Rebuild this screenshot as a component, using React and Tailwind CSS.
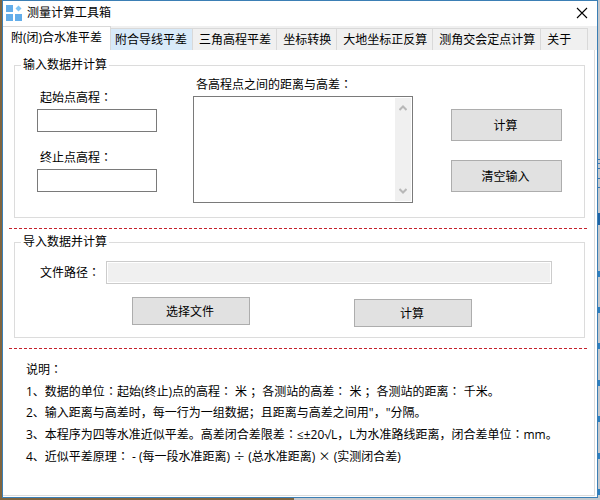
import clsx from "clsx";

const TABS = [
  { label: "附(闭)合水准平差", state: "active" },
  { label: "附合导线平差", state: "hover" },
  { label: "三角高程平差" },
  { label: "坐标转换" },
  { label: "大地坐标正反算" },
  { label: "测角交会定点计算" },
  { label: "关于", wide: true },
];

const NOTES = [
  "1、数据的单位：起始(终止)点的高程： 米 ；各测站的高差： 米 ；各测站的距离： 千米。",
  "2、输入距离与高差时，每一行为一组数据；且距离与高差之间用\"，\"分隔。",
  "3、本程序为四等水准近似平差。高差闭合差限差：≤±20√L，L为水准路线距离，闭合差单位：mm。",
  "4、近似平差原理： - (每一段水准距离) ÷ (总水准距离) × (实测闭合差)",
];

// y positions of the scroll ticks on the desktop strip
const TICKS = [274, 310, 346, 383, 419, 456, 492];

// colon and operators sit in the middle of a full-width cell
function Text({ children }) {
  return children.split(/([：÷×])/).map((part, i) =>
    /^[：÷×]$/.test(part) ? <span key={i} className="font-['Noto_Sans_CJK_JP',sans-serif]">{part}</span> : part
  );
}

function AppIcon() {
  return (
    <svg width="17" height="17" viewBox="0 0 17 17" fill="#62adea" aria-hidden="true">
      <rect x="0" y="0" width="7" height="7" />
      <rect x="0" y="9" width="7" height="7" />
      <rect x="9" y="9" width="7" height="7" />
      <path d="M12.5 0.5 15.5 3.5 12.5 6.5 9.5 3.5Z" fill="#7fc4f3" />
    </svg>
  );
}

function TitleBar() {
  return (
    <header className="flex h-[25px] items-center justify-between bg-white pr-[9px] pb-px pl-[3px]">
      <div className="flex items-center gap-1">
        <AppIcon />
        <h1>测量计算工具箱</h1>
      </div>
      <button type="button" aria-label="关闭">
        <svg width="12" height="12" viewBox="0 0 12 12" fill="none" stroke="#000" strokeWidth="1.1">
          <path d="M1 1 11 11M11 1 1 11" />
        </svg>
      </button>
    </header>
  );
}

function TabBar() {
  return (
    <nav role="tablist" className="flex items-end whitespace-nowrap bg-[#f0f0f0]">
      {TABS.map(({ label, state, wide }) => (
        <button
          key={label}
          type="button"
          role="tab"
          aria-selected={state === "active"}
          className={clsx(
            "border-t border-r border-[#d9d9d9] text-left leading-4",
            state === "active" && "h-6 bg-white pr-2 pb-0.5 pl-2",
            state === "hover" && "h-[22px] bg-[#d8eaf9] pt-px pr-[5px] pl-1",
            !state && "h-[22px] bg-[#f0f0f0] pt-px pl-1.5",
            !state && (wide ? "pr-4" : "pr-[5px]")
          )}
        >
          {label}
        </button>
      ))}
    </nav>
  );
}

function Group({ title, children }) {
  return (
    <fieldset className="mr-[9px] ml-[11px] min-w-0 border border-[#dcdcdc]">
      <legend className="ml-1.5 px-0.5">{title}</legend>
      {children}
    </fieldset>
  );
}

function Divider() {
  return <hr className="mr-[7px] ml-1.5 border-t border-dashed border-[#c4202c]" />;
}

function PushButton({ className, children }) {
  return (
    <button type="button" className={clsx("border border-[#adadad] bg-[#e1e1e1] pt-0.5 pr-0.5 text-center", className)}>
      {children}
    </button>
  );
}

function Field({ id, label }) {
  return (
    <div className="flex flex-col gap-[3px]">
      <label htmlFor={id} className="pl-[3px]"><Text>{label}</Text></label>
      <input id={id} type="text" className="h-[23px] w-[120px] border border-[#7a7a7a] bg-white px-1 outline-none" />
    </div>
  );
}

function ScrollBar() {
  return (
    <div className="my-px mr-px flex w-4 flex-col items-center justify-between bg-[#f0f0f0] py-[7px]" aria-hidden="true">
      <svg width="8" height="6" viewBox="0 0 8 6" fill="none" stroke="#b8b8b8" strokeWidth="2"><path d="M0.5 5 4 1.5 7.5 5" /></svg>
      <svg width="8" height="6" viewBox="0 0 8 6" fill="none" stroke="#b8b8b8" strokeWidth="2"><path d="M0.5 1 4 4.5 7.5 1" /></svg>
    </div>
  );
}

function ManualInput() {
  return (
    <Group title="输入数据并计算">
      <div className="flex px-[22px] pt-[3px] pb-3.5">
        <div className="flex flex-col gap-[17px] pt-[13px]">
          <Field id="start" label="起始点高程：" />
          <Field id="end" label="终止点高程：" />
        </div>
        <div className="mr-[38px] ml-9 flex min-w-0 flex-1 flex-col gap-[3px]">
          <label htmlFor="rows" className="pl-[3px]"><Text>各高程点之间的距离与高差：</Text></label>
          <div className="flex h-[107px] border border-[#7a7a7a] bg-white">
            <textarea id="rows" className="min-w-0 flex-1 resize-none overflow-hidden px-1 outline-none" />
            <ScrollBar />
          </div>
        </div>
        <div className="flex flex-col gap-[19px] pt-[33px]">
          <PushButton className="h-8 w-[111px]">计算</PushButton>
          <PushButton className="h-8 w-[111px]">清空输入</PushButton>
        </div>
      </div>
    </Group>
  );
}

function FileInput() {
  return (
    <Group title="导入数据并计算">
      <div className="flex items-center pt-[11px] pr-8 pl-[25px]">
        <label htmlFor="path" className="w-[66px]"><Text>文件路径：</Text></label>
        <input id="path" type="text" readOnly className="h-[23px] min-w-0 flex-1 border border-[#cccccc] bg-[#f0f0f0] px-1 outline-1 -outline-offset-2 outline-white" />
      </div>
      <div className="flex items-start justify-between pt-[13px] pr-28 pb-2.5 pl-[117px]">
        <PushButton className="h-7 w-[118px]">选择文件</PushButton>
        <PushButton className="mt-0.5 h-7 w-[118px]">计算</PushButton>
      </div>
    </Group>
  );
}

function Notes() {
  return (
    <section className="pt-[9px] pl-[23px] leading-[21px] whitespace-nowrap">
      <h2><Text>说明：</Text></h2>
      {NOTES.map(note => (
        <p key={note}><Text>{note}</Text></p>
      ))}
    </section>
  );
}

function DesktopEdge() {
  return (
    <svg className="absolute inset-y-0 right-0 h-full w-0.5" viewBox="0 0 2 500" preserveAspectRatio="none" aria-hidden="true">
      <path d="M0 159.5h2M0 163.5h2M0 168.5h2M0 178.5h2M0 187.5h2" stroke="#3a78b4" />
      <rect x="0" y="213" width="2" height="12" fill="#1f64a5" />
      {TICKS.map(y => <rect key={y} x="0" y={y - 3} width="2" height="6" fill="#2d7fc0" />)}
    </svg>
  );
}

export default function App() {
  return (
    <div className="relative flex min-h-screen bg-[linear-gradient(to_right,#80653f_49%,#c6c8cc_49%)] pr-0.5 pb-0.5 pl-0.5 font-['Open_Sans','Noto_Sans_CJK_SC',sans-serif] text-[12px] leading-4 text-black">
      <main className="flex min-w-0 flex-1 flex-col border border-[#3b7fb5] bg-white">
        <TitleBar />
        <TabBar />
        <div className="mr-0.5 mb-px flex flex-1 flex-col border-r border-b border-[#dcdcdc] pt-[7px]">
          <ManualInput />
          <div className="pt-2.5 pb-[5px]"><Divider /></div>
          <FileInput />
          <div className="pt-2.5"><Divider /></div>
          <Notes />
        </div>
      </main>
      <DesktopEdge />
    </div>
  );
}
